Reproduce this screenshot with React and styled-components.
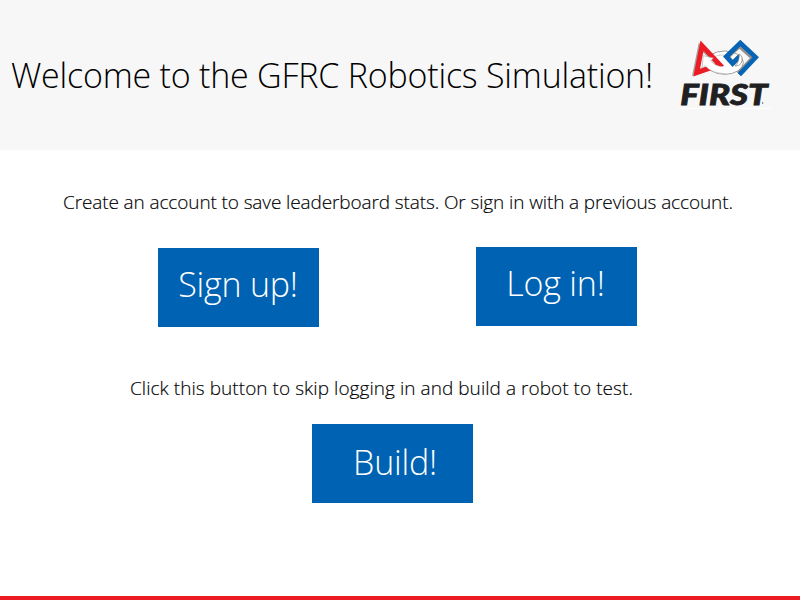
import React from "react";
import styled, { createGlobalStyle } from "styled-components";

const GlobalStyle = createGlobalStyle`
  * { box-sizing: border-box; }
  body {
    margin: 0;
    background: #fff;
    font-family: "Open Sans", "Noto Sans", sans-serif;
    font-weight: 300;
    color: #000;
  }
`;

const Page = styled.div`
  width: 800px;
  height: 600px;
  display: flex;
  flex-direction: column;
  overflow: hidden;
`;

const Header = styled.header`
  height: 150px;
  flex: none;
  display: flex;
  align-items: flex-start;
  justify-content: space-between;
  padding: 30px 20px 0 11px;
  background: #f7f7f7;
`;

const Title = styled.h1`
  margin: 20px 0 0;
  font-size: 34px;
  line-height: 50px;
  font-weight: 300;
  letter-spacing: -0.22px;
  white-space: nowrap;
`;

const Logo = styled.svg`
  width: 110px;
  height: 85px;
  flex: none;
`;

const Main = styled.main`
  flex: 1;
  display: flex;
  flex-direction: column;
`;

const Message = styled.p`
  margin: ${(p) => p.$top}px 0 0 ${(p) => p.$left}px;
  font-size: 19px;
  line-height: 28px;
  letter-spacing: ${(p) => p.$tracking}px;
  -webkit-text-stroke: 0.15px #000;
  white-space: nowrap;
`;

const Actions = styled.div`
  display: flex;
  align-items: flex-start;
  margin-top: ${(p) => p.$top}px;
  padding-left: ${(p) => p.$left}px;
  gap: 157px;
`;

const Button = styled.button`
  width: 161px;
  height: 79px;
  margin-top: ${(p) => p.$drop || 0}px;
  padding: 0 ${(p) => p.$pull || 0}px ${(p) => p.$lift ?? 7}px ${(p) => p.$nudge || 0}px;
  border: 0;
  background: #0062b2;
  color: #fff;
  font-family: inherit;
  font-size: 34px;
  line-height: 50px;
  font-weight: 300;
  letter-spacing: -0.2px;
  white-space: nowrap;
  cursor: pointer;
`;

const Footer = styled.footer`
  height: 4px;
  flex: none;
  background: #ed1c24;
`;

const Wordmark = styled.text`
  font-family: "Lato", sans-serif;
  font-size: 87px;
  font-weight: 900;
  font-style: italic;
`;

function FirstLogo() {
  return (
    <Logo viewBox="0 0 330 255" role="img" aria-label="FIRST">
      <path d="M25 235H305" stroke="#fff" strokeWidth="3" />
      <ellipse cx="164" cy="98" rx="56" ry="35" fill="#fff" stroke="#8c8c8c" strokeWidth="2.5" />
      <path d="M128 82Q158 68 185 82" fill="none" stroke="#bbb" strokeWidth="2" />
      <path d="M93 48 77 127 150 103Z" fill="#f7f7f7" stroke="#a2a2a2" strokeWidth="12" transform="translate(-3 2)" />
      <path d="M96 47 80 128 149 104Z" fill="none" stroke="#ed1c24" strokeWidth="15" />
      <path d="M100 77 L130 84 L122 93 Q136 109 160 110 L165 131 Q125 130 105 107 L96 114Z" fill="#fff" />
      <path d="M165 131Q125 130 105 107L96 114 100 77 130 84 122 93Q136 109 160 110" fill="none" stroke="#999" strokeWidth="1.5" />
      <path d="M208 46 171 81 188 100 211 77M208 46 250 84 206 131" fill="none" stroke="#96918c" strokeWidth="15" />
      <path d="M208 134 257 82 211 39 169 80 188 100 209 79" fill="none" stroke="#0864b4" strokeWidth="14" />
      <path d="M208 72Q221 81 214 99Q208 109 195 108Q208 96 208 72Z" fill="#fff" stroke="#777" strokeWidth="2" />
      <Wordmark x="31" y="225" textLength="262" lengthAdjust="spacingAndGlyphs" fill="#202022" stroke="#202022" strokeWidth="2.5">
        FIRST
      </Wordmark>
      <circle cx="278" cy="219" r="2" fill="#444" />
    </Logo>
  );
}

export default function App() {
  return (
    <>
      <GlobalStyle />
      <Page>
        <Header>
          <Title>Welcome to the GFRC Robotics Simulation!</Title>
          <FirstLogo />
        </Header>
        <Main>
          <Message $top={38} $left={63} $tracking={-0.115}>
            Create an account to save leaderboard stats. Or sign in with a previous account.
          </Message>
          <Actions $top={31} $left={158}>
            <Button $drop={1} $pull={1}>Sign up!</Button>
            <Button $pull={2}>Log in!</Button>
          </Actions>
          <Message $top={47} $left={130} $tracking={0.05}>
            Click this button to skip logging in and build a robot to test.
          </Message>
          <Actions $top={22} $left={312}>
            <Button $nudge={5} $lift={3}>Build!</Button>
          </Actions>
        </Main>
        <Footer />
      </Page>
    </>
  );
}
